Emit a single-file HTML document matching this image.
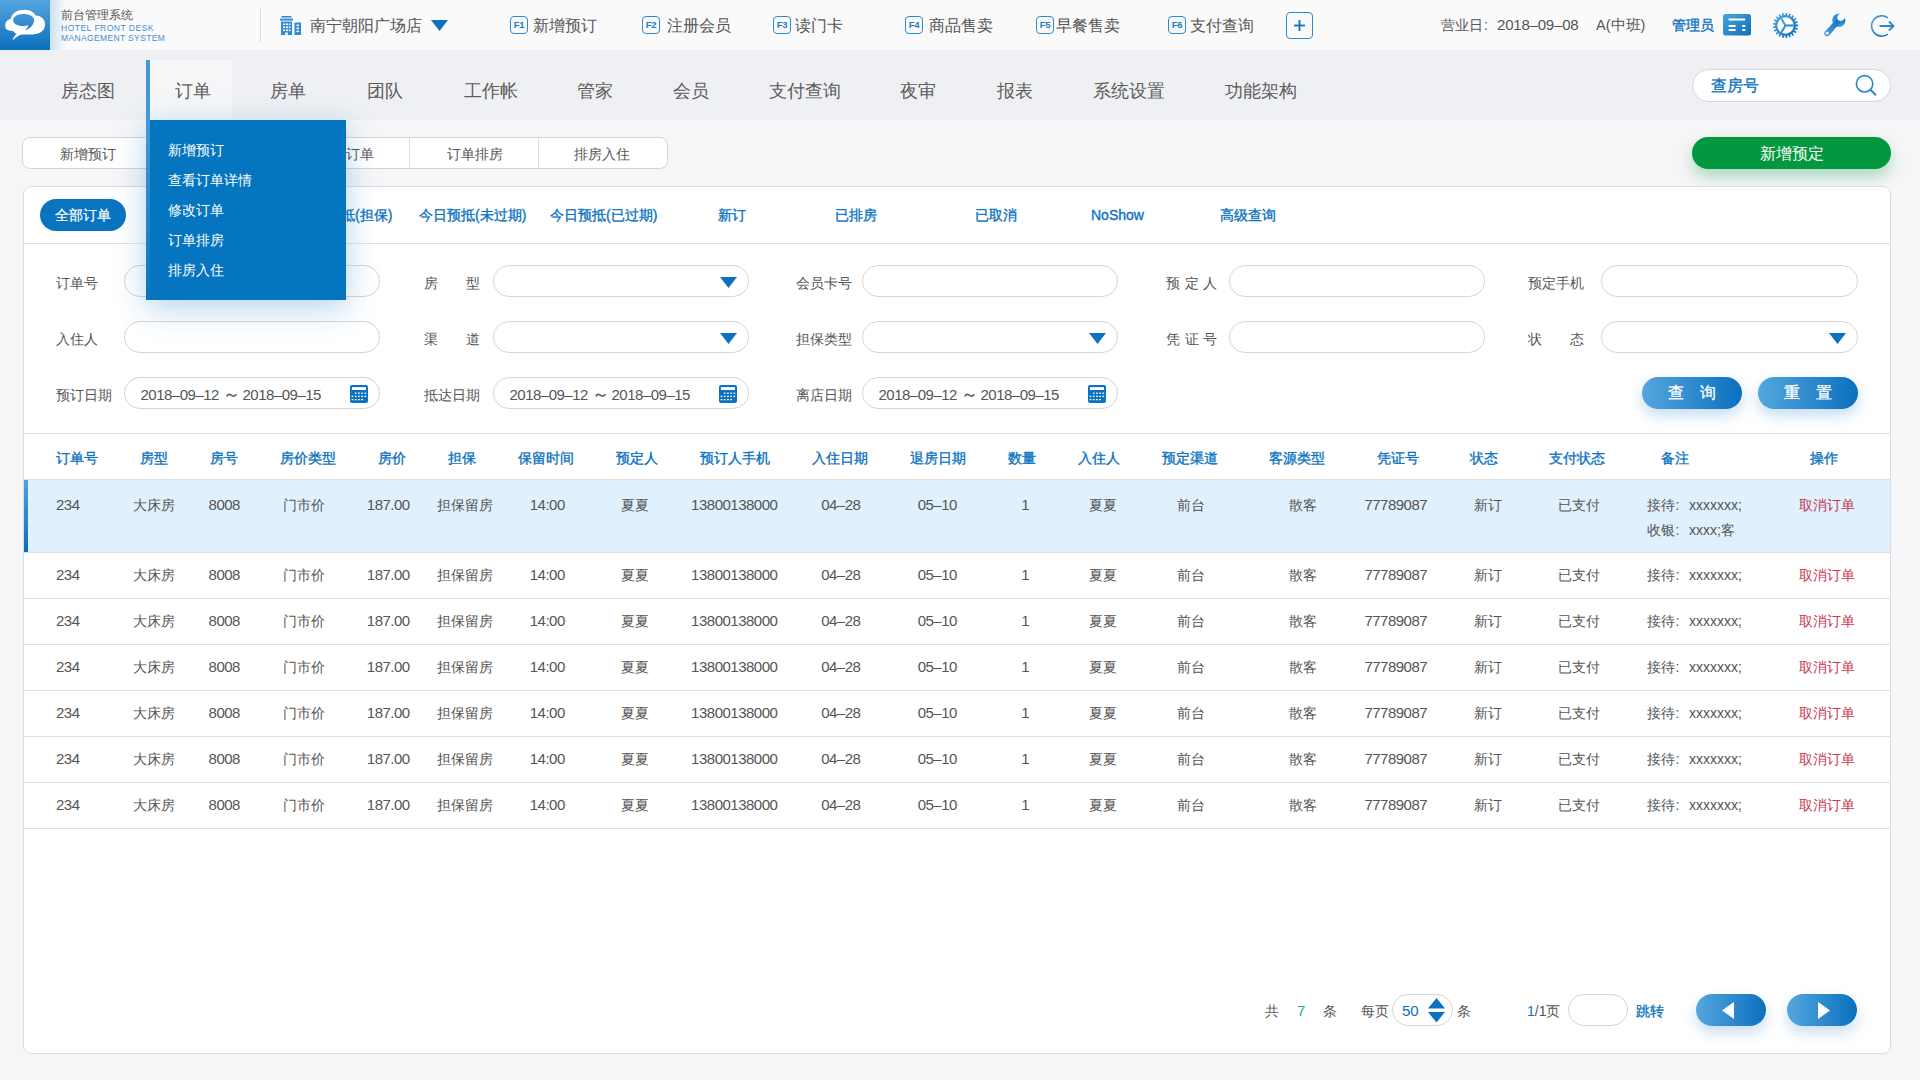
<!DOCTYPE html><html><head><meta charset="utf-8"><style>
html,body{margin:0;padding:0;}
body{width:1920px;height:1080px;position:relative;overflow:hidden;background:#f6f6f8;font-family:"Liberation Sans",sans-serif;}
.t{position:absolute;white-space:nowrap;}
.r{position:absolute;box-sizing:border-box;}
svg{position:absolute;overflow:visible;}
</style></head><body>
<div class="r" style="left:0px;top:0px;width:1920px;height:50px;background:#fafafb;"></div>
<div class="r" style="left:0px;top:50px;width:1920px;height:70px;background:#eef0f3;"></div>
<div class="r" style="left:50px;top:0px;width:16px;height:50px;background:linear-gradient(90deg,rgba(200,222,240,0.9),rgba(250,250,251,0));"></div>
<div class="r" style="left:0px;top:0px;width:50px;height:50px;background:linear-gradient(180deg,#55a6de,#0a6fbd);"></div>
<svg style="left:0;top:0" width="50" height="50" viewBox="0 0 50 50">
<path fill="#fff" fill-rule="evenodd" d="M8.5 30.2 C3.8 29.6 3.8 19.6 10.6 18.9 C12.2 12.6 17.5 9.7 24.5 9.7 C30.5 9.7 34 12.5 35.6 15.4 C41.6 15.6 45.2 19.6 45.1 24.6 C45 30.4 40.2 34.4 33 34.4 L22 34.4 C18.5 35.2 15.3 37.5 12.6 40.4 C13.2 37.4 15 35 17 33.8 C15.3 33.2 14 32.2 13.2 30.9 C11.5 31 10 30.8 8.5 30.2 Z M23.8 14 C17.5 14 13.2 16.6 13.2 20.2 C13.2 23.6 17.3 26.1 23.6 26 C25.2 26 26.8 25.7 28.4 25.3 C27.8 27.3 26.6 29.1 24.6 30.6 C29.3 29.4 32.4 26.5 33.6 22.8 C34.1 21.9 34.2 21 34.2 20.2 C34.2 16.6 29.8 14 23.8 14 Z"/>
</svg>
<div class="t" style="left:61px;top:7.5px;font-size:12px;line-height:14px;color:#555;">前台管理系统</div>
<div class="t" style="left:61px;top:23.0px;font-size:8.5px;line-height:10px;color:#3a90d2;letter-spacing:0.5px;">HOTEL FRONT DESK</div>
<div class="t" style="left:61px;top:33.0px;font-size:8.5px;line-height:10px;color:#3a90d2;letter-spacing:0.36px;">MANAGEMENT SYSTEM</div>
<div class="r" style="left:260px;top:9px;width:1px;height:33px;background:#dcdcdc;"></div>
<svg style="left:280px;top:16px" width="22" height="19" viewBox="0 0 22 19">
<rect x="1.5" y="0" width="10" height="1.6" fill="#2f8bd2"/>
<rect x="0" y="2.6" width="13" height="2" fill="#2f8bd2"/>
<g fill="#2f8bd2">
<rect x="1" y="5.6" width="11" height="13.4"/>
<rect x="14.5" y="6.5" width="6.5" height="12.5"/>
</g>
<g fill="#fafafb">
<rect x="3" y="7.5" width="2.2" height="1.6"/><rect x="6" y="7.5" width="2.2" height="1.6"/><rect x="9" y="7.5" width="1.5" height="1.6"/>
<rect x="3" y="10.5" width="2.2" height="1.6"/><rect x="6" y="10.5" width="2.2" height="1.6"/><rect x="9" y="10.5" width="1.5" height="1.6"/>
<rect x="3" y="13.5" width="2.2" height="1.6"/><rect x="6" y="13.5" width="2.2" height="1.6"/><rect x="9" y="13.5" width="1.5" height="1.6"/>
<rect x="5.2" y="16.5" width="2.6" height="2.5"/>
<rect x="16.5" y="8.5" width="2.5" height="1.6"/><rect x="16.5" y="11.5" width="2.5" height="1.6"/><rect x="16.5" y="14.5" width="2.5" height="1.6"/>
</g></svg>
<div class="t" style="left:310px;top:16.0px;font-size:16px;line-height:20px;color:#555;">南宁朝阳广场店</div>
<svg style="left:431px;top:20px" width="17" height="11"><path d="M0 0 H17 L8.5 11 Z" fill="#0a72bf"/></svg>
<div class="r" style="left:510px;top:16px;width:18px;height:18px;border:1.3px solid #2b8ad0;border-radius:4px;"></div>
<div class="t" style="left:510.0px;top:18.0px;width:18px;text-align:center;font-size:9.5px;line-height:14px;color:#1a7cc6;font-weight:bold;letter-spacing:-0.2px;">F1</div>
<div class="t" style="left:533px;top:16.0px;font-size:16px;line-height:20px;color:#555;">新增预订</div>
<div class="r" style="left:642px;top:16px;width:18px;height:18px;border:1.3px solid #2b8ad0;border-radius:4px;"></div>
<div class="t" style="left:642.0px;top:18.0px;width:18px;text-align:center;font-size:9.5px;line-height:14px;color:#1a7cc6;font-weight:bold;letter-spacing:-0.2px;">F2</div>
<div class="t" style="left:667px;top:16.0px;font-size:16px;line-height:20px;color:#555;">注册会员</div>
<div class="r" style="left:773px;top:16px;width:18px;height:18px;border:1.3px solid #2b8ad0;border-radius:4px;"></div>
<div class="t" style="left:773.0px;top:18.0px;width:18px;text-align:center;font-size:9.5px;line-height:14px;color:#1a7cc6;font-weight:bold;letter-spacing:-0.2px;">F3</div>
<div class="t" style="left:795px;top:16.0px;font-size:16px;line-height:20px;color:#555;">读门卡</div>
<div class="r" style="left:905px;top:16px;width:18px;height:18px;border:1.3px solid #2b8ad0;border-radius:4px;"></div>
<div class="t" style="left:905.0px;top:18.0px;width:18px;text-align:center;font-size:9.5px;line-height:14px;color:#1a7cc6;font-weight:bold;letter-spacing:-0.2px;">F4</div>
<div class="t" style="left:929px;top:16.0px;font-size:16px;line-height:20px;color:#555;">商品售卖</div>
<div class="r" style="left:1036px;top:16px;width:18px;height:18px;border:1.3px solid #2b8ad0;border-radius:4px;"></div>
<div class="t" style="left:1036.0px;top:18.0px;width:18px;text-align:center;font-size:9.5px;line-height:14px;color:#1a7cc6;font-weight:bold;letter-spacing:-0.2px;">F5</div>
<div class="t" style="left:1056px;top:16.0px;font-size:16px;line-height:20px;color:#555;">早餐售卖</div>
<div class="r" style="left:1168px;top:16px;width:18px;height:18px;border:1.3px solid #2b8ad0;border-radius:4px;"></div>
<div class="t" style="left:1168.0px;top:18.0px;width:18px;text-align:center;font-size:9.5px;line-height:14px;color:#1a7cc6;font-weight:bold;letter-spacing:-0.2px;">F6</div>
<div class="t" style="left:1190px;top:16.0px;font-size:16px;line-height:20px;color:#555;">支付查询</div>
<div class="r" style="left:1286px;top:12px;width:27px;height:27px;border:1.3px solid #2b8ad0;border-radius:4px;"></div>
<svg style="left:1292px;top:18px" width="15" height="15"><rect x="6.6" y="2" width="1.8" height="11" fill="#0a72bf"/><rect x="2" y="6.6" width="11" height="1.8" fill="#0a72bf"/></svg>
<div class="t" style="left:1441px;top:15.0px;font-size:14px;line-height:20px;color:#555;">营业日</div>
<div class="t" style="left:1484px;top:15.0px;font-size:14px;line-height:20px;color:#555;">:</div>
<div class="t" style="left:1497px;top:15.0px;font-size:15px;line-height:20px;color:#555;letter-spacing:-0.2px;">2018–09–08</div>
<div class="t" style="left:1596px;top:15.0px;font-size:14.5px;line-height:20px;color:#555;">A(中班)</div>
<div class="t" style="left:1672px;top:15.0px;font-size:14px;line-height:20px;color:#0a72bf;-webkit-text-stroke:0.35px #0a72bf;">管理员</div>
<svg style="left:1723px;top:14px" width="28" height="22" viewBox="0 0 28 22">
<defs><linearGradient id="gc" x1="0" y1="0" x2="1" y2="1"><stop offset="0" stop-color="#4ea3dd"/><stop offset="1" stop-color="#0a6fbd"/></linearGradient></defs>
<rect x="0" y="0" width="28" height="21.5" rx="2.5" fill="url(#gc)"/>
<rect x="5.4" y="4.4" width="17" height="2" rx="1" fill="#fff"/>
<rect x="5.4" y="11" width="7.5" height="2" rx="1" fill="#fff"/><rect x="19" y="11" width="3.6" height="2" rx="1" fill="#fff"/>
<rect x="5.4" y="15" width="7.5" height="2" rx="1" fill="#fff"/><rect x="19" y="15" width="3.6" height="2" rx="1" fill="#fff"/>
</svg>
<svg style="left:1773px;top:13px" width="25" height="25" viewBox="0 0 25 25">
<defs><linearGradient id="gg" x1="0" y1="0" x2="1" y2="1"><stop offset="0" stop-color="#55a6de"/><stop offset="1" stop-color="#0a6fbd"/></linearGradient></defs>
<polygon points="22.46,11.60 25.07,11.60 25.07,13.40 22.46,13.40 22.28,14.58 24.78,15.34 24.24,17.07 21.75,16.29 21.23,17.37 23.39,18.83 22.37,20.33 20.22,18.85 19.41,19.73 21.04,21.76 19.63,22.89 18.01,20.85 16.97,21.44 17.93,23.87 16.25,24.53 15.30,22.10 14.14,22.36 14.34,24.96 12.54,25.10 12.35,22.50 11.16,22.41 10.58,24.95 8.82,24.55 9.41,22.01 8.30,21.57 7.00,23.84 5.43,22.93 6.74,20.68 5.81,19.93 3.90,21.71 2.67,20.39 4.59,18.62 3.92,17.63 1.57,18.77 0.78,17.14 3.14,16.01 2.79,14.87 0.21,15.27 -0.06,13.48 2.52,13.10 2.52,11.90 -0.06,11.52 0.21,9.73 2.79,10.13 3.14,8.99 0.78,7.86 1.57,6.23 3.92,7.37 4.59,6.38 2.67,4.61 3.90,3.29 5.81,5.07 6.74,4.32 5.43,2.07 7.00,1.16 8.30,3.43 9.41,2.99 8.82,0.45 10.58,0.05 11.16,2.59 12.35,2.50 12.54,-0.10 14.34,0.04 14.14,2.64 15.30,2.90 16.25,0.47 17.93,1.13 16.97,3.56 18.01,4.15 19.63,2.11 21.04,3.24 19.41,5.27 20.22,6.15 22.37,4.67 23.39,6.17 21.23,7.63 21.75,8.71 24.24,7.93 24.78,9.66 22.28,10.42" fill="url(#gg)"/>
<circle cx="12.5" cy="12.5" r="10.4" fill="url(#gg)"/>
<circle cx="12.5" cy="12.5" r="8.2" fill="#fafafb"/>
<g stroke="url(#gg)" stroke-width="2" fill="none">
<path d="M12.5 12.5 L8.3 5.6 M12.5 12.5 L8.3 19.4 M12.5 12.5 L20.7 12.5"/></g>
</svg>
<svg style="left:1824px;top:13px" width="22" height="24" viewBox="0 0 22 24">
<defs><linearGradient id="gw" x1="0" y1="1" x2="1" y2="0"><stop offset="0" stop-color="#55a6de"/><stop offset="1" stop-color="#0a6fbd"/></linearGradient>
<mask id="wm"><rect x="-2" y="-2" width="26" height="28" fill="#fff"/><circle cx="16.6" cy="4.6" r="3.3" fill="#000"/><path d="M18.93 6.93 L14.27 2.27 L21.3 -4.8 L25.9 -0.1 Z" fill="#000"/><circle cx="3.2" cy="20.3" r="1.45" fill="#000"/></mask></defs>
<g mask="url(#wm)" fill="url(#gw)">
<circle cx="14.8" cy="7.4" r="6.6"/>
<path d="M12.8 5.8 L16.2 9.4 L5.2 22.4 C4 23.6 2 23.6 0.9 22.4 C-0.1 21.3 -0.1 19.6 1 18.6 Z"/>
</g>
</svg>
<svg style="left:1870px;top:14px" width="25" height="24" viewBox="0 0 25 24">
<defs><linearGradient id="gl" x1="0" y1="0" x2="1" y2="1"><stop offset="0" stop-color="#4ea3dd"/><stop offset="1" stop-color="#0a6fbd"/></linearGradient></defs>
<path d="M17.8 3.8 A10.2 10.2 0 1 0 17.8 20.2" stroke="url(#gl)" stroke-width="1.6" fill="none"/>
<path d="M9.5 12 H23.5 M19 7.5 L23.5 12 L19 16.5" stroke="#2b88ce" stroke-width="1.8" fill="none"/>
</svg>
<div class="r" style="left:146px;top:60px;width:86px;height:60px;background:#f6f6f9;"></div>
<div class="r" style="left:146px;top:60px;width:4px;height:240px;background:linear-gradient(180deg,#4399d6 0%,#4399d6 28%,#2a88cc 60%,#0675bf 100%);z-index:5;"></div>
<div class="t" style="left:61px;top:80.5px;font-size:18px;line-height:20px;color:#5c5c5c;">房态图</div>
<div class="t" style="left:175px;top:80.5px;font-size:18px;line-height:20px;color:#5c5c5c;">订单</div>
<div class="t" style="left:270px;top:80.5px;font-size:18px;line-height:20px;color:#5c5c5c;">房单</div>
<div class="t" style="left:367px;top:80.5px;font-size:18px;line-height:20px;color:#5c5c5c;">团队</div>
<div class="t" style="left:464px;top:80.5px;font-size:18px;line-height:20px;color:#5c5c5c;">工作帐</div>
<div class="t" style="left:577px;top:80.5px;font-size:18px;line-height:20px;color:#5c5c5c;">管家</div>
<div class="t" style="left:673px;top:80.5px;font-size:18px;line-height:20px;color:#5c5c5c;">会员</div>
<div class="t" style="left:769px;top:80.5px;font-size:18px;line-height:20px;color:#5c5c5c;">支付查询</div>
<div class="t" style="left:900px;top:80.5px;font-size:18px;line-height:20px;color:#5c5c5c;">夜审</div>
<div class="t" style="left:997px;top:80.5px;font-size:18px;line-height:20px;color:#5c5c5c;">报表</div>
<div class="t" style="left:1093px;top:80.5px;font-size:18px;line-height:20px;color:#5c5c5c;">系统设置</div>
<div class="t" style="left:1225px;top:80.5px;font-size:18px;line-height:20px;color:#5c5c5c;">功能架构</div>
<div class="r" style="left:1692px;top:69px;width:199px;height:33px;background:#fff;border:1px solid #d6d6d6;border-radius:17px;"></div>
<div class="t" style="left:1711px;top:76.0px;font-size:16px;line-height:20px;color:#0a72bf;-webkit-text-stroke:0.3px #0a72bf;">查房号</div>
<svg style="left:1855px;top:74px" width="24" height="24"><circle cx="9.6" cy="9.8" r="8.2" stroke="#2a88cf" stroke-width="1.7" fill="none"/><path d="M15.5 15.8 L21 21.2" stroke="#2a88cf" stroke-width="1.9"/></svg>
<div class="r" style="left:22px;top:137px;width:646px;height:32px;background:#fff;border:1px solid #d5d5d5;border-radius:8px;"></div>
<div class="r" style="left:151px;top:138px;width:1px;height:30px;background:#dcdcdc;"></div>
<div class="r" style="left:280px;top:138px;width:1px;height:30px;background:#dcdcdc;"></div>
<div class="r" style="left:409px;top:138px;width:1px;height:30px;background:#dcdcdc;"></div>
<div class="r" style="left:538px;top:138px;width:1px;height:30px;background:#dcdcdc;"></div>
<div class="t" style="left:23.0px;top:144.0px;width:129px;text-align:center;font-size:14px;line-height:20px;color:#555;">新增预订</div>
<div class="t" style="left:152.0px;top:144.0px;width:129px;text-align:center;font-size:14px;line-height:20px;color:#555;">查看订单详情</div>
<div class="t" style="left:281.0px;top:144.0px;width:129px;text-align:center;font-size:14px;line-height:20px;color:#555;">修改订单</div>
<div class="t" style="left:410.0px;top:144.0px;width:129px;text-align:center;font-size:14px;line-height:20px;color:#555;">订单排房</div>
<div class="t" style="left:537.5px;top:144.0px;width:129px;text-align:center;font-size:14px;line-height:20px;color:#555;">排房入住</div>
<div class="r" style="left:1692px;top:137px;width:199px;height:32px;background:#03973f;border-radius:16px;box-shadow:0 8px 16px rgba(3,151,63,0.3);"></div>
<div class="t" style="left:1692.0px;top:144.0px;width:199px;text-align:center;font-size:16px;line-height:20px;color:#fff;">新增预定</div>
<div class="r" style="left:23px;top:186px;width:1868px;height:868px;background:#fff;border:1px solid #dcdcdc;border-radius:8px;"></div>
<div class="r" style="left:40px;top:199px;width:86px;height:32px;background:#0a74c0;border-radius:16px;"></div>
<div class="t" style="left:40.0px;top:205.0px;width:86px;text-align:center;font-size:14px;line-height:20px;color:#fff;-webkit-text-stroke:0.2px #fff;">全部订单</div>
<div class="t" style="left:299px;top:205.0px;font-size:14px;line-height:20px;color:#0a72bf;-webkit-text-stroke:0.35px #0a72bf;">今日预抵(担保)</div>
<div class="t" style="left:419px;top:205.0px;font-size:14px;line-height:20px;color:#0a72bf;-webkit-text-stroke:0.35px #0a72bf;">今日预抵(未过期)</div>
<div class="t" style="left:550px;top:205.0px;font-size:14px;line-height:20px;color:#0a72bf;-webkit-text-stroke:0.35px #0a72bf;">今日预抵(已过期)</div>
<div class="t" style="left:718px;top:205.0px;font-size:14px;line-height:20px;color:#0a72bf;-webkit-text-stroke:0.35px #0a72bf;">新订</div>
<div class="t" style="left:835px;top:205.0px;font-size:14px;line-height:20px;color:#0a72bf;-webkit-text-stroke:0.35px #0a72bf;">已排房</div>
<div class="t" style="left:975px;top:205.0px;font-size:14px;line-height:20px;color:#0a72bf;-webkit-text-stroke:0.35px #0a72bf;">已取消</div>
<div class="t" style="left:1091px;top:205.0px;font-size:14px;line-height:20px;color:#0a72bf;-webkit-text-stroke:0.35px #0a72bf;">NoShow</div>
<div class="t" style="left:1220px;top:205.0px;font-size:14px;line-height:20px;color:#0a72bf;-webkit-text-stroke:0.35px #0a72bf;">高级查询</div>
<div class="r" style="left:24px;top:243px;width:1866px;height:1px;background:#e2e2e2;"></div>
<div class="t" style="left:56px;top:273.0px;font-size:14px;line-height:20px;color:#555;">订单号</div>
<div class="r" style="left:124px;top:265px;width:256px;height:32px;background:#fff;border:1px solid #d6d6d6;border-radius:16px;"></div>
<div class="t" style="left:424px;top:273px;width:56px;font-size:14px;line-height:20px;color:#555;display:flex;justify-content:space-between;"><span>房</span><span>型</span></div>
<div class="r" style="left:493px;top:265px;width:256px;height:32px;background:#fff;border:1px solid #d6d6d6;border-radius:16px;"></div>
<svg style="left:720px;top:277px" width="17" height="11"><path d="M0 0 H17 L8.5 11 Z" fill="#0a72bf"/></svg>
<div class="t" style="left:796px;top:273.0px;font-size:14px;line-height:20px;color:#555;">会员卡号</div>
<div class="r" style="left:862px;top:265px;width:256px;height:32px;background:#fff;border:1px solid #d6d6d6;border-radius:16px;"></div>
<div class="t" style="left:1166px;top:273px;width:51px;font-size:14px;line-height:20px;color:#555;display:flex;justify-content:space-between;"><span>预</span><span>定</span><span>人</span></div>
<div class="r" style="left:1229px;top:265px;width:256px;height:32px;background:#fff;border:1px solid #d6d6d6;border-radius:16px;"></div>
<div class="t" style="left:1528px;top:273.0px;font-size:14px;line-height:20px;color:#555;">预定手机</div>
<div class="r" style="left:1601px;top:265px;width:257px;height:32px;background:#fff;border:1px solid #d6d6d6;border-radius:16px;"></div>
<div class="t" style="left:56px;top:328.5px;font-size:14px;line-height:20px;color:#555;">入住人</div>
<div class="r" style="left:124px;top:321px;width:256px;height:32px;background:#fff;border:1px solid #d6d6d6;border-radius:16px;"></div>
<div class="t" style="left:424px;top:328.5px;width:56px;font-size:14px;line-height:20px;color:#555;display:flex;justify-content:space-between;"><span>渠</span><span>道</span></div>
<div class="r" style="left:493px;top:321px;width:256px;height:32px;background:#fff;border:1px solid #d6d6d6;border-radius:16px;"></div>
<svg style="left:720px;top:333px" width="17" height="11"><path d="M0 0 H17 L8.5 11 Z" fill="#0a72bf"/></svg>
<div class="t" style="left:796px;top:328.5px;font-size:14px;line-height:20px;color:#555;">担保类型</div>
<div class="r" style="left:862px;top:321px;width:256px;height:32px;background:#fff;border:1px solid #d6d6d6;border-radius:16px;"></div>
<svg style="left:1089px;top:333px" width="17" height="11"><path d="M0 0 H17 L8.5 11 Z" fill="#0a72bf"/></svg>
<div class="t" style="left:1166px;top:328.5px;width:51px;font-size:14px;line-height:20px;color:#555;display:flex;justify-content:space-between;"><span>凭</span><span>证</span><span>号</span></div>
<div class="r" style="left:1229px;top:321px;width:256px;height:32px;background:#fff;border:1px solid #d6d6d6;border-radius:16px;"></div>
<div class="t" style="left:1528px;top:328.5px;width:56px;font-size:14px;line-height:20px;color:#555;display:flex;justify-content:space-between;"><span>状</span><span>态</span></div>
<div class="r" style="left:1601px;top:321px;width:257px;height:32px;background:#fff;border:1px solid #d6d6d6;border-radius:16px;"></div>
<svg style="left:1829px;top:333px" width="17" height="11"><path d="M0 0 H17 L8.5 11 Z" fill="#0a72bf"/></svg>
<div class="t" style="left:56px;top:385.0px;font-size:14px;line-height:20px;color:#555;">预订日期</div>
<div class="r" style="left:124px;top:377px;width:256px;height:32px;background:#fff;border:1px solid #d6d6d6;border-radius:16px;"></div>
<div class="t" style="left:140.5px;top:385.0px;font-size:15px;line-height:20px;color:#555;letter-spacing:-0.5px;">2018–09–12</div>
<div class="t" style="left:223px;top:385.0px;font-size:17px;line-height:20px;color:#555;-webkit-text-stroke:0.3px #555;">～</div>
<div class="t" style="left:242.5px;top:385.0px;font-size:15px;line-height:20px;color:#555;letter-spacing:-0.5px;">2018–09–15</div>
<svg style="left:350px;top:385px" width="18" height="18" viewBox="0 0 18 18"><rect x="0" y="0" width="18" height="18" rx="2" fill="#0a72bf"/><rect x="1.9" y="2.1" width="14.1" height="2.9" fill="#fff"/><rect x="4.85" y="7.55" width="1.7" height="1.3" fill="#fff"/><rect x="8.05" y="7.55" width="1.7" height="1.3" fill="#fff"/><rect x="11.25" y="7.55" width="1.7" height="1.3" fill="#fff"/><rect x="14.45" y="7.55" width="1.7" height="1.3" fill="#fff"/><rect x="1.65" y="10.75" width="1.7" height="1.3" fill="#fff"/><rect x="4.85" y="10.75" width="1.7" height="1.3" fill="#fff"/><rect x="8.05" y="10.75" width="1.7" height="1.3" fill="#fff"/><rect x="11.25" y="10.75" width="1.7" height="1.3" fill="#fff"/><rect x="14.45" y="10.75" width="1.7" height="1.3" fill="#fff"/><rect x="1.65" y="13.95" width="1.7" height="1.3" fill="#fff"/><rect x="4.85" y="13.95" width="1.7" height="1.3" fill="#fff"/><rect x="8.05" y="13.95" width="1.7" height="1.3" fill="#fff"/><rect x="11.25" y="13.95" width="1.7" height="1.3" fill="#fff"/></svg>
<div class="t" style="left:424px;top:385.0px;font-size:14px;line-height:20px;color:#555;">抵达日期</div>
<div class="r" style="left:493px;top:377px;width:256px;height:32px;background:#fff;border:1px solid #d6d6d6;border-radius:16px;"></div>
<div class="t" style="left:509.5px;top:385.0px;font-size:15px;line-height:20px;color:#555;letter-spacing:-0.5px;">2018–09–12</div>
<div class="t" style="left:592px;top:385.0px;font-size:17px;line-height:20px;color:#555;-webkit-text-stroke:0.3px #555;">～</div>
<div class="t" style="left:611.5px;top:385.0px;font-size:15px;line-height:20px;color:#555;letter-spacing:-0.5px;">2018–09–15</div>
<svg style="left:719px;top:385px" width="18" height="18" viewBox="0 0 18 18"><rect x="0" y="0" width="18" height="18" rx="2" fill="#0a72bf"/><rect x="1.9" y="2.1" width="14.1" height="2.9" fill="#fff"/><rect x="4.85" y="7.55" width="1.7" height="1.3" fill="#fff"/><rect x="8.05" y="7.55" width="1.7" height="1.3" fill="#fff"/><rect x="11.25" y="7.55" width="1.7" height="1.3" fill="#fff"/><rect x="14.45" y="7.55" width="1.7" height="1.3" fill="#fff"/><rect x="1.65" y="10.75" width="1.7" height="1.3" fill="#fff"/><rect x="4.85" y="10.75" width="1.7" height="1.3" fill="#fff"/><rect x="8.05" y="10.75" width="1.7" height="1.3" fill="#fff"/><rect x="11.25" y="10.75" width="1.7" height="1.3" fill="#fff"/><rect x="14.45" y="10.75" width="1.7" height="1.3" fill="#fff"/><rect x="1.65" y="13.95" width="1.7" height="1.3" fill="#fff"/><rect x="4.85" y="13.95" width="1.7" height="1.3" fill="#fff"/><rect x="8.05" y="13.95" width="1.7" height="1.3" fill="#fff"/><rect x="11.25" y="13.95" width="1.7" height="1.3" fill="#fff"/></svg>
<div class="t" style="left:796px;top:385.0px;font-size:14px;line-height:20px;color:#555;">离店日期</div>
<div class="r" style="left:862px;top:377px;width:256px;height:32px;background:#fff;border:1px solid #d6d6d6;border-radius:16px;"></div>
<div class="t" style="left:878.5px;top:385.0px;font-size:15px;line-height:20px;color:#555;letter-spacing:-0.5px;">2018–09–12</div>
<div class="t" style="left:961px;top:385.0px;font-size:17px;line-height:20px;color:#555;-webkit-text-stroke:0.3px #555;">～</div>
<div class="t" style="left:980.5px;top:385.0px;font-size:15px;line-height:20px;color:#555;letter-spacing:-0.5px;">2018–09–15</div>
<svg style="left:1088px;top:385px" width="18" height="18" viewBox="0 0 18 18"><rect x="0" y="0" width="18" height="18" rx="2" fill="#0a72bf"/><rect x="1.9" y="2.1" width="14.1" height="2.9" fill="#fff"/><rect x="4.85" y="7.55" width="1.7" height="1.3" fill="#fff"/><rect x="8.05" y="7.55" width="1.7" height="1.3" fill="#fff"/><rect x="11.25" y="7.55" width="1.7" height="1.3" fill="#fff"/><rect x="14.45" y="7.55" width="1.7" height="1.3" fill="#fff"/><rect x="1.65" y="10.75" width="1.7" height="1.3" fill="#fff"/><rect x="4.85" y="10.75" width="1.7" height="1.3" fill="#fff"/><rect x="8.05" y="10.75" width="1.7" height="1.3" fill="#fff"/><rect x="11.25" y="10.75" width="1.7" height="1.3" fill="#fff"/><rect x="14.45" y="10.75" width="1.7" height="1.3" fill="#fff"/><rect x="1.65" y="13.95" width="1.7" height="1.3" fill="#fff"/><rect x="4.85" y="13.95" width="1.7" height="1.3" fill="#fff"/><rect x="8.05" y="13.95" width="1.7" height="1.3" fill="#fff"/><rect x="11.25" y="13.95" width="1.7" height="1.3" fill="#fff"/></svg>
<div class="r" style="left:1642px;top:377px;width:100px;height:32px;background:linear-gradient(90deg,#55a6de,#0a70be);border-radius:16px;box-shadow:0 6px 14px rgba(10,114,191,0.25);"></div>
<div class="t" style="left:1642.0px;top:383.0px;width:100px;text-align:center;font-size:16px;line-height:20px;color:#fff;-webkit-text-stroke:0.3px #fff;">查　询</div>
<div class="r" style="left:1758px;top:377px;width:100px;height:32px;background:linear-gradient(90deg,#55a6de,#0a70be);border-radius:16px;box-shadow:0 6px 14px rgba(10,114,191,0.25);"></div>
<div class="t" style="left:1758.0px;top:383.0px;width:100px;text-align:center;font-size:16px;line-height:20px;color:#fff;-webkit-text-stroke:0.3px #fff;">重　置</div>
<div class="r" style="left:24px;top:433px;width:1866px;height:1px;background:#e2e2e2;"></div>
<div class="t" style="left:56px;top:448.0px;font-size:14px;line-height:20px;color:#0a72bf;-webkit-text-stroke:0.35px #0a72bf;">订单号</div>
<div class="t" style="left:94.0px;top:448.0px;width:120px;text-align:center;font-size:14px;line-height:20px;color:#0a72bf;-webkit-text-stroke:0.35px #0a72bf;">房型</div>
<div class="t" style="left:164.0px;top:448.0px;width:120px;text-align:center;font-size:14px;line-height:20px;color:#0a72bf;-webkit-text-stroke:0.35px #0a72bf;">房号</div>
<div class="t" style="left:248.0px;top:448.0px;width:120px;text-align:center;font-size:14px;line-height:20px;color:#0a72bf;-webkit-text-stroke:0.35px #0a72bf;">房价类型</div>
<div class="t" style="left:332.0px;top:448.0px;width:120px;text-align:center;font-size:14px;line-height:20px;color:#0a72bf;-webkit-text-stroke:0.35px #0a72bf;">房价</div>
<div class="t" style="left:402.0px;top:448.0px;width:120px;text-align:center;font-size:14px;line-height:20px;color:#0a72bf;-webkit-text-stroke:0.35px #0a72bf;">担保</div>
<div class="t" style="left:485.5px;top:448.0px;width:120px;text-align:center;font-size:14px;line-height:20px;color:#0a72bf;-webkit-text-stroke:0.35px #0a72bf;">保留时间</div>
<div class="t" style="left:577.0px;top:448.0px;width:120px;text-align:center;font-size:14px;line-height:20px;color:#0a72bf;-webkit-text-stroke:0.35px #0a72bf;">预定人</div>
<div class="t" style="left:675.0px;top:448.0px;width:120px;text-align:center;font-size:14px;line-height:20px;color:#0a72bf;-webkit-text-stroke:0.35px #0a72bf;">预订人手机</div>
<div class="t" style="left:780.0px;top:448.0px;width:120px;text-align:center;font-size:14px;line-height:20px;color:#0a72bf;-webkit-text-stroke:0.35px #0a72bf;">入住日期</div>
<div class="t" style="left:878.0px;top:448.0px;width:120px;text-align:center;font-size:14px;line-height:20px;color:#0a72bf;-webkit-text-stroke:0.35px #0a72bf;">退房日期</div>
<div class="t" style="left:962.0px;top:448.0px;width:120px;text-align:center;font-size:14px;line-height:20px;color:#0a72bf;-webkit-text-stroke:0.35px #0a72bf;">数量</div>
<div class="t" style="left:1038.5px;top:448.0px;width:120px;text-align:center;font-size:14px;line-height:20px;color:#0a72bf;-webkit-text-stroke:0.35px #0a72bf;">入住人</div>
<div class="t" style="left:1129.5px;top:448.0px;width:120px;text-align:center;font-size:14px;line-height:20px;color:#0a72bf;-webkit-text-stroke:0.35px #0a72bf;">预定渠道</div>
<div class="t" style="left:1237.0px;top:448.0px;width:120px;text-align:center;font-size:14px;line-height:20px;color:#0a72bf;-webkit-text-stroke:0.35px #0a72bf;">客源类型</div>
<div class="t" style="left:1337.5px;top:448.0px;width:120px;text-align:center;font-size:14px;line-height:20px;color:#0a72bf;-webkit-text-stroke:0.35px #0a72bf;">凭证号</div>
<div class="t" style="left:1423.5px;top:448.0px;width:120px;text-align:center;font-size:14px;line-height:20px;color:#0a72bf;-webkit-text-stroke:0.35px #0a72bf;">状态</div>
<div class="t" style="left:1517.0px;top:448.0px;width:120px;text-align:center;font-size:14px;line-height:20px;color:#0a72bf;-webkit-text-stroke:0.35px #0a72bf;">支付状态</div>
<div class="t" style="left:1615.0px;top:448.0px;width:120px;text-align:center;font-size:14px;line-height:20px;color:#0a72bf;-webkit-text-stroke:0.35px #0a72bf;">备注</div>
<div class="t" style="left:1764.0px;top:448.0px;width:120px;text-align:center;font-size:14px;line-height:20px;color:#0a72bf;-webkit-text-stroke:0.35px #0a72bf;">操作</div>
<div class="r" style="left:24px;top:479px;width:1866px;height:1px;background:#e2e2e2;"></div>
<div class="r" style="left:24px;top:480px;width:1866px;height:72px;background:#e1f0fd;"></div>
<div class="r" style="left:24px;top:480px;width:4px;height:72px;background:linear-gradient(180deg,#4fa3dc,#0a6fbd);"></div>
<div class="t" style="left:56px;top:494.5px;font-size:15px;line-height:20px;color:#555;letter-spacing:-0.5px;">234</div>
<div class="t" style="left:93.5px;top:494.5px;width:120px;text-align:center;font-size:14px;line-height:20px;color:#555;">大床房</div>
<div class="t" style="left:164.25px;top:494.5px;width:120px;text-align:center;font-size:15px;line-height:20px;color:#555;letter-spacing:-0.5px;">8008</div>
<div class="t" style="left:244.0px;top:494.5px;width:120px;text-align:center;font-size:14px;line-height:20px;color:#555;">门市价</div>
<div class="t" style="left:328.25px;top:494.5px;width:120px;text-align:center;font-size:15px;line-height:20px;color:#555;letter-spacing:-0.5px;">187.00</div>
<div class="t" style="left:405.0px;top:494.5px;width:120px;text-align:center;font-size:14px;line-height:20px;color:#555;">担保留房</div>
<div class="t" style="left:487.25px;top:494.5px;width:120px;text-align:center;font-size:15px;line-height:20px;color:#555;letter-spacing:-0.5px;">14:00</div>
<div class="t" style="left:574.5px;top:494.5px;width:120px;text-align:center;font-size:14px;line-height:20px;color:#555;">夏夏</div>
<div class="t" style="left:674.25px;top:494.5px;width:120px;text-align:center;font-size:15px;line-height:20px;color:#555;letter-spacing:-0.5px;">13800138000</div>
<div class="t" style="left:780.75px;top:494.5px;width:120px;text-align:center;font-size:15px;line-height:20px;color:#555;letter-spacing:-0.5px;">04–28</div>
<div class="t" style="left:877.25px;top:494.5px;width:120px;text-align:center;font-size:15px;line-height:20px;color:#555;letter-spacing:-0.5px;">05–10</div>
<div class="t" style="left:965.25px;top:494.5px;width:120px;text-align:center;font-size:15px;line-height:20px;color:#555;letter-spacing:-0.5px;">1</div>
<div class="t" style="left:1042.5px;top:494.5px;width:120px;text-align:center;font-size:14px;line-height:20px;color:#555;">夏夏</div>
<div class="t" style="left:1131.0px;top:494.5px;width:120px;text-align:center;font-size:14px;line-height:20px;color:#555;">前台</div>
<div class="t" style="left:1243.0px;top:494.5px;width:120px;text-align:center;font-size:14px;line-height:20px;color:#555;">散客</div>
<div class="t" style="left:1335.75px;top:494.5px;width:120px;text-align:center;font-size:15px;line-height:20px;color:#555;letter-spacing:-0.5px;">77789087</div>
<div class="t" style="left:1428.0px;top:494.5px;width:120px;text-align:center;font-size:14px;line-height:20px;color:#555;">新订</div>
<div class="t" style="left:1519.0px;top:494.5px;width:120px;text-align:center;font-size:14px;line-height:20px;color:#555;">已支付</div>
<div class="t" style="left:1647px;top:494.5px;font-size:14px;line-height:20px;color:#555;">接待</div>
<div class="t" style="left:1675.5px;top:494.5px;font-size:14px;line-height:20px;color:#555;">:</div>
<div class="t" style="left:1689px;top:494.5px;font-size:14px;line-height:20px;color:#555;">xxxxxxx;</div>
<div class="t" style="left:1767.0px;top:494.5px;width:120px;text-align:center;font-size:14px;line-height:20px;color:#c8374f;">取消订单</div>
<div class="t" style="left:1647px;top:520.0px;font-size:14px;line-height:20px;color:#555;">收银</div>
<div class="t" style="left:1675.5px;top:520.0px;font-size:14px;line-height:20px;color:#555;">:</div>
<div class="t" style="left:1689px;top:520.0px;font-size:14px;line-height:20px;color:#555;">xxxx;客</div>
<div class="t" style="left:56px;top:565.0px;font-size:15px;line-height:20px;color:#555;letter-spacing:-0.5px;">234</div>
<div class="t" style="left:93.5px;top:565.0px;width:120px;text-align:center;font-size:14px;line-height:20px;color:#555;">大床房</div>
<div class="t" style="left:164.25px;top:565.0px;width:120px;text-align:center;font-size:15px;line-height:20px;color:#555;letter-spacing:-0.5px;">8008</div>
<div class="t" style="left:244.0px;top:565.0px;width:120px;text-align:center;font-size:14px;line-height:20px;color:#555;">门市价</div>
<div class="t" style="left:328.25px;top:565.0px;width:120px;text-align:center;font-size:15px;line-height:20px;color:#555;letter-spacing:-0.5px;">187.00</div>
<div class="t" style="left:405.0px;top:565.0px;width:120px;text-align:center;font-size:14px;line-height:20px;color:#555;">担保留房</div>
<div class="t" style="left:487.25px;top:565.0px;width:120px;text-align:center;font-size:15px;line-height:20px;color:#555;letter-spacing:-0.5px;">14:00</div>
<div class="t" style="left:574.5px;top:565.0px;width:120px;text-align:center;font-size:14px;line-height:20px;color:#555;">夏夏</div>
<div class="t" style="left:674.25px;top:565.0px;width:120px;text-align:center;font-size:15px;line-height:20px;color:#555;letter-spacing:-0.5px;">13800138000</div>
<div class="t" style="left:780.75px;top:565.0px;width:120px;text-align:center;font-size:15px;line-height:20px;color:#555;letter-spacing:-0.5px;">04–28</div>
<div class="t" style="left:877.25px;top:565.0px;width:120px;text-align:center;font-size:15px;line-height:20px;color:#555;letter-spacing:-0.5px;">05–10</div>
<div class="t" style="left:965.25px;top:565.0px;width:120px;text-align:center;font-size:15px;line-height:20px;color:#555;letter-spacing:-0.5px;">1</div>
<div class="t" style="left:1042.5px;top:565.0px;width:120px;text-align:center;font-size:14px;line-height:20px;color:#555;">夏夏</div>
<div class="t" style="left:1131.0px;top:565.0px;width:120px;text-align:center;font-size:14px;line-height:20px;color:#555;">前台</div>
<div class="t" style="left:1243.0px;top:565.0px;width:120px;text-align:center;font-size:14px;line-height:20px;color:#555;">散客</div>
<div class="t" style="left:1335.75px;top:565.0px;width:120px;text-align:center;font-size:15px;line-height:20px;color:#555;letter-spacing:-0.5px;">77789087</div>
<div class="t" style="left:1428.0px;top:565.0px;width:120px;text-align:center;font-size:14px;line-height:20px;color:#555;">新订</div>
<div class="t" style="left:1519.0px;top:565.0px;width:120px;text-align:center;font-size:14px;line-height:20px;color:#555;">已支付</div>
<div class="t" style="left:1647px;top:565.0px;font-size:14px;line-height:20px;color:#555;">接待</div>
<div class="t" style="left:1675.5px;top:565.0px;font-size:14px;line-height:20px;color:#555;">:</div>
<div class="t" style="left:1689px;top:565.0px;font-size:14px;line-height:20px;color:#555;">xxxxxxx;</div>
<div class="t" style="left:1767.0px;top:565.0px;width:120px;text-align:center;font-size:14px;line-height:20px;color:#c8374f;">取消订单</div>
<div class="t" style="left:56px;top:611.0px;font-size:15px;line-height:20px;color:#555;letter-spacing:-0.5px;">234</div>
<div class="t" style="left:93.5px;top:611.0px;width:120px;text-align:center;font-size:14px;line-height:20px;color:#555;">大床房</div>
<div class="t" style="left:164.25px;top:611.0px;width:120px;text-align:center;font-size:15px;line-height:20px;color:#555;letter-spacing:-0.5px;">8008</div>
<div class="t" style="left:244.0px;top:611.0px;width:120px;text-align:center;font-size:14px;line-height:20px;color:#555;">门市价</div>
<div class="t" style="left:328.25px;top:611.0px;width:120px;text-align:center;font-size:15px;line-height:20px;color:#555;letter-spacing:-0.5px;">187.00</div>
<div class="t" style="left:405.0px;top:611.0px;width:120px;text-align:center;font-size:14px;line-height:20px;color:#555;">担保留房</div>
<div class="t" style="left:487.25px;top:611.0px;width:120px;text-align:center;font-size:15px;line-height:20px;color:#555;letter-spacing:-0.5px;">14:00</div>
<div class="t" style="left:574.5px;top:611.0px;width:120px;text-align:center;font-size:14px;line-height:20px;color:#555;">夏夏</div>
<div class="t" style="left:674.25px;top:611.0px;width:120px;text-align:center;font-size:15px;line-height:20px;color:#555;letter-spacing:-0.5px;">13800138000</div>
<div class="t" style="left:780.75px;top:611.0px;width:120px;text-align:center;font-size:15px;line-height:20px;color:#555;letter-spacing:-0.5px;">04–28</div>
<div class="t" style="left:877.25px;top:611.0px;width:120px;text-align:center;font-size:15px;line-height:20px;color:#555;letter-spacing:-0.5px;">05–10</div>
<div class="t" style="left:965.25px;top:611.0px;width:120px;text-align:center;font-size:15px;line-height:20px;color:#555;letter-spacing:-0.5px;">1</div>
<div class="t" style="left:1042.5px;top:611.0px;width:120px;text-align:center;font-size:14px;line-height:20px;color:#555;">夏夏</div>
<div class="t" style="left:1131.0px;top:611.0px;width:120px;text-align:center;font-size:14px;line-height:20px;color:#555;">前台</div>
<div class="t" style="left:1243.0px;top:611.0px;width:120px;text-align:center;font-size:14px;line-height:20px;color:#555;">散客</div>
<div class="t" style="left:1335.75px;top:611.0px;width:120px;text-align:center;font-size:15px;line-height:20px;color:#555;letter-spacing:-0.5px;">77789087</div>
<div class="t" style="left:1428.0px;top:611.0px;width:120px;text-align:center;font-size:14px;line-height:20px;color:#555;">新订</div>
<div class="t" style="left:1519.0px;top:611.0px;width:120px;text-align:center;font-size:14px;line-height:20px;color:#555;">已支付</div>
<div class="t" style="left:1647px;top:611.0px;font-size:14px;line-height:20px;color:#555;">接待</div>
<div class="t" style="left:1675.5px;top:611.0px;font-size:14px;line-height:20px;color:#555;">:</div>
<div class="t" style="left:1689px;top:611.0px;font-size:14px;line-height:20px;color:#555;">xxxxxxx;</div>
<div class="t" style="left:1767.0px;top:611.0px;width:120px;text-align:center;font-size:14px;line-height:20px;color:#c8374f;">取消订单</div>
<div class="t" style="left:56px;top:657.0px;font-size:15px;line-height:20px;color:#555;letter-spacing:-0.5px;">234</div>
<div class="t" style="left:93.5px;top:657.0px;width:120px;text-align:center;font-size:14px;line-height:20px;color:#555;">大床房</div>
<div class="t" style="left:164.25px;top:657.0px;width:120px;text-align:center;font-size:15px;line-height:20px;color:#555;letter-spacing:-0.5px;">8008</div>
<div class="t" style="left:244.0px;top:657.0px;width:120px;text-align:center;font-size:14px;line-height:20px;color:#555;">门市价</div>
<div class="t" style="left:328.25px;top:657.0px;width:120px;text-align:center;font-size:15px;line-height:20px;color:#555;letter-spacing:-0.5px;">187.00</div>
<div class="t" style="left:405.0px;top:657.0px;width:120px;text-align:center;font-size:14px;line-height:20px;color:#555;">担保留房</div>
<div class="t" style="left:487.25px;top:657.0px;width:120px;text-align:center;font-size:15px;line-height:20px;color:#555;letter-spacing:-0.5px;">14:00</div>
<div class="t" style="left:574.5px;top:657.0px;width:120px;text-align:center;font-size:14px;line-height:20px;color:#555;">夏夏</div>
<div class="t" style="left:674.25px;top:657.0px;width:120px;text-align:center;font-size:15px;line-height:20px;color:#555;letter-spacing:-0.5px;">13800138000</div>
<div class="t" style="left:780.75px;top:657.0px;width:120px;text-align:center;font-size:15px;line-height:20px;color:#555;letter-spacing:-0.5px;">04–28</div>
<div class="t" style="left:877.25px;top:657.0px;width:120px;text-align:center;font-size:15px;line-height:20px;color:#555;letter-spacing:-0.5px;">05–10</div>
<div class="t" style="left:965.25px;top:657.0px;width:120px;text-align:center;font-size:15px;line-height:20px;color:#555;letter-spacing:-0.5px;">1</div>
<div class="t" style="left:1042.5px;top:657.0px;width:120px;text-align:center;font-size:14px;line-height:20px;color:#555;">夏夏</div>
<div class="t" style="left:1131.0px;top:657.0px;width:120px;text-align:center;font-size:14px;line-height:20px;color:#555;">前台</div>
<div class="t" style="left:1243.0px;top:657.0px;width:120px;text-align:center;font-size:14px;line-height:20px;color:#555;">散客</div>
<div class="t" style="left:1335.75px;top:657.0px;width:120px;text-align:center;font-size:15px;line-height:20px;color:#555;letter-spacing:-0.5px;">77789087</div>
<div class="t" style="left:1428.0px;top:657.0px;width:120px;text-align:center;font-size:14px;line-height:20px;color:#555;">新订</div>
<div class="t" style="left:1519.0px;top:657.0px;width:120px;text-align:center;font-size:14px;line-height:20px;color:#555;">已支付</div>
<div class="t" style="left:1647px;top:657.0px;font-size:14px;line-height:20px;color:#555;">接待</div>
<div class="t" style="left:1675.5px;top:657.0px;font-size:14px;line-height:20px;color:#555;">:</div>
<div class="t" style="left:1689px;top:657.0px;font-size:14px;line-height:20px;color:#555;">xxxxxxx;</div>
<div class="t" style="left:1767.0px;top:657.0px;width:120px;text-align:center;font-size:14px;line-height:20px;color:#c8374f;">取消订单</div>
<div class="t" style="left:56px;top:703.0px;font-size:15px;line-height:20px;color:#555;letter-spacing:-0.5px;">234</div>
<div class="t" style="left:93.5px;top:703.0px;width:120px;text-align:center;font-size:14px;line-height:20px;color:#555;">大床房</div>
<div class="t" style="left:164.25px;top:703.0px;width:120px;text-align:center;font-size:15px;line-height:20px;color:#555;letter-spacing:-0.5px;">8008</div>
<div class="t" style="left:244.0px;top:703.0px;width:120px;text-align:center;font-size:14px;line-height:20px;color:#555;">门市价</div>
<div class="t" style="left:328.25px;top:703.0px;width:120px;text-align:center;font-size:15px;line-height:20px;color:#555;letter-spacing:-0.5px;">187.00</div>
<div class="t" style="left:405.0px;top:703.0px;width:120px;text-align:center;font-size:14px;line-height:20px;color:#555;">担保留房</div>
<div class="t" style="left:487.25px;top:703.0px;width:120px;text-align:center;font-size:15px;line-height:20px;color:#555;letter-spacing:-0.5px;">14:00</div>
<div class="t" style="left:574.5px;top:703.0px;width:120px;text-align:center;font-size:14px;line-height:20px;color:#555;">夏夏</div>
<div class="t" style="left:674.25px;top:703.0px;width:120px;text-align:center;font-size:15px;line-height:20px;color:#555;letter-spacing:-0.5px;">13800138000</div>
<div class="t" style="left:780.75px;top:703.0px;width:120px;text-align:center;font-size:15px;line-height:20px;color:#555;letter-spacing:-0.5px;">04–28</div>
<div class="t" style="left:877.25px;top:703.0px;width:120px;text-align:center;font-size:15px;line-height:20px;color:#555;letter-spacing:-0.5px;">05–10</div>
<div class="t" style="left:965.25px;top:703.0px;width:120px;text-align:center;font-size:15px;line-height:20px;color:#555;letter-spacing:-0.5px;">1</div>
<div class="t" style="left:1042.5px;top:703.0px;width:120px;text-align:center;font-size:14px;line-height:20px;color:#555;">夏夏</div>
<div class="t" style="left:1131.0px;top:703.0px;width:120px;text-align:center;font-size:14px;line-height:20px;color:#555;">前台</div>
<div class="t" style="left:1243.0px;top:703.0px;width:120px;text-align:center;font-size:14px;line-height:20px;color:#555;">散客</div>
<div class="t" style="left:1335.75px;top:703.0px;width:120px;text-align:center;font-size:15px;line-height:20px;color:#555;letter-spacing:-0.5px;">77789087</div>
<div class="t" style="left:1428.0px;top:703.0px;width:120px;text-align:center;font-size:14px;line-height:20px;color:#555;">新订</div>
<div class="t" style="left:1519.0px;top:703.0px;width:120px;text-align:center;font-size:14px;line-height:20px;color:#555;">已支付</div>
<div class="t" style="left:1647px;top:703.0px;font-size:14px;line-height:20px;color:#555;">接待</div>
<div class="t" style="left:1675.5px;top:703.0px;font-size:14px;line-height:20px;color:#555;">:</div>
<div class="t" style="left:1689px;top:703.0px;font-size:14px;line-height:20px;color:#555;">xxxxxxx;</div>
<div class="t" style="left:1767.0px;top:703.0px;width:120px;text-align:center;font-size:14px;line-height:20px;color:#c8374f;">取消订单</div>
<div class="t" style="left:56px;top:749.0px;font-size:15px;line-height:20px;color:#555;letter-spacing:-0.5px;">234</div>
<div class="t" style="left:93.5px;top:749.0px;width:120px;text-align:center;font-size:14px;line-height:20px;color:#555;">大床房</div>
<div class="t" style="left:164.25px;top:749.0px;width:120px;text-align:center;font-size:15px;line-height:20px;color:#555;letter-spacing:-0.5px;">8008</div>
<div class="t" style="left:244.0px;top:749.0px;width:120px;text-align:center;font-size:14px;line-height:20px;color:#555;">门市价</div>
<div class="t" style="left:328.25px;top:749.0px;width:120px;text-align:center;font-size:15px;line-height:20px;color:#555;letter-spacing:-0.5px;">187.00</div>
<div class="t" style="left:405.0px;top:749.0px;width:120px;text-align:center;font-size:14px;line-height:20px;color:#555;">担保留房</div>
<div class="t" style="left:487.25px;top:749.0px;width:120px;text-align:center;font-size:15px;line-height:20px;color:#555;letter-spacing:-0.5px;">14:00</div>
<div class="t" style="left:574.5px;top:749.0px;width:120px;text-align:center;font-size:14px;line-height:20px;color:#555;">夏夏</div>
<div class="t" style="left:674.25px;top:749.0px;width:120px;text-align:center;font-size:15px;line-height:20px;color:#555;letter-spacing:-0.5px;">13800138000</div>
<div class="t" style="left:780.75px;top:749.0px;width:120px;text-align:center;font-size:15px;line-height:20px;color:#555;letter-spacing:-0.5px;">04–28</div>
<div class="t" style="left:877.25px;top:749.0px;width:120px;text-align:center;font-size:15px;line-height:20px;color:#555;letter-spacing:-0.5px;">05–10</div>
<div class="t" style="left:965.25px;top:749.0px;width:120px;text-align:center;font-size:15px;line-height:20px;color:#555;letter-spacing:-0.5px;">1</div>
<div class="t" style="left:1042.5px;top:749.0px;width:120px;text-align:center;font-size:14px;line-height:20px;color:#555;">夏夏</div>
<div class="t" style="left:1131.0px;top:749.0px;width:120px;text-align:center;font-size:14px;line-height:20px;color:#555;">前台</div>
<div class="t" style="left:1243.0px;top:749.0px;width:120px;text-align:center;font-size:14px;line-height:20px;color:#555;">散客</div>
<div class="t" style="left:1335.75px;top:749.0px;width:120px;text-align:center;font-size:15px;line-height:20px;color:#555;letter-spacing:-0.5px;">77789087</div>
<div class="t" style="left:1428.0px;top:749.0px;width:120px;text-align:center;font-size:14px;line-height:20px;color:#555;">新订</div>
<div class="t" style="left:1519.0px;top:749.0px;width:120px;text-align:center;font-size:14px;line-height:20px;color:#555;">已支付</div>
<div class="t" style="left:1647px;top:749.0px;font-size:14px;line-height:20px;color:#555;">接待</div>
<div class="t" style="left:1675.5px;top:749.0px;font-size:14px;line-height:20px;color:#555;">:</div>
<div class="t" style="left:1689px;top:749.0px;font-size:14px;line-height:20px;color:#555;">xxxxxxx;</div>
<div class="t" style="left:1767.0px;top:749.0px;width:120px;text-align:center;font-size:14px;line-height:20px;color:#c8374f;">取消订单</div>
<div class="t" style="left:56px;top:795.0px;font-size:15px;line-height:20px;color:#555;letter-spacing:-0.5px;">234</div>
<div class="t" style="left:93.5px;top:795.0px;width:120px;text-align:center;font-size:14px;line-height:20px;color:#555;">大床房</div>
<div class="t" style="left:164.25px;top:795.0px;width:120px;text-align:center;font-size:15px;line-height:20px;color:#555;letter-spacing:-0.5px;">8008</div>
<div class="t" style="left:244.0px;top:795.0px;width:120px;text-align:center;font-size:14px;line-height:20px;color:#555;">门市价</div>
<div class="t" style="left:328.25px;top:795.0px;width:120px;text-align:center;font-size:15px;line-height:20px;color:#555;letter-spacing:-0.5px;">187.00</div>
<div class="t" style="left:405.0px;top:795.0px;width:120px;text-align:center;font-size:14px;line-height:20px;color:#555;">担保留房</div>
<div class="t" style="left:487.25px;top:795.0px;width:120px;text-align:center;font-size:15px;line-height:20px;color:#555;letter-spacing:-0.5px;">14:00</div>
<div class="t" style="left:574.5px;top:795.0px;width:120px;text-align:center;font-size:14px;line-height:20px;color:#555;">夏夏</div>
<div class="t" style="left:674.25px;top:795.0px;width:120px;text-align:center;font-size:15px;line-height:20px;color:#555;letter-spacing:-0.5px;">13800138000</div>
<div class="t" style="left:780.75px;top:795.0px;width:120px;text-align:center;font-size:15px;line-height:20px;color:#555;letter-spacing:-0.5px;">04–28</div>
<div class="t" style="left:877.25px;top:795.0px;width:120px;text-align:center;font-size:15px;line-height:20px;color:#555;letter-spacing:-0.5px;">05–10</div>
<div class="t" style="left:965.25px;top:795.0px;width:120px;text-align:center;font-size:15px;line-height:20px;color:#555;letter-spacing:-0.5px;">1</div>
<div class="t" style="left:1042.5px;top:795.0px;width:120px;text-align:center;font-size:14px;line-height:20px;color:#555;">夏夏</div>
<div class="t" style="left:1131.0px;top:795.0px;width:120px;text-align:center;font-size:14px;line-height:20px;color:#555;">前台</div>
<div class="t" style="left:1243.0px;top:795.0px;width:120px;text-align:center;font-size:14px;line-height:20px;color:#555;">散客</div>
<div class="t" style="left:1335.75px;top:795.0px;width:120px;text-align:center;font-size:15px;line-height:20px;color:#555;letter-spacing:-0.5px;">77789087</div>
<div class="t" style="left:1428.0px;top:795.0px;width:120px;text-align:center;font-size:14px;line-height:20px;color:#555;">新订</div>
<div class="t" style="left:1519.0px;top:795.0px;width:120px;text-align:center;font-size:14px;line-height:20px;color:#555;">已支付</div>
<div class="t" style="left:1647px;top:795.0px;font-size:14px;line-height:20px;color:#555;">接待</div>
<div class="t" style="left:1675.5px;top:795.0px;font-size:14px;line-height:20px;color:#555;">:</div>
<div class="t" style="left:1689px;top:795.0px;font-size:14px;line-height:20px;color:#555;">xxxxxxx;</div>
<div class="t" style="left:1767.0px;top:795.0px;width:120px;text-align:center;font-size:14px;line-height:20px;color:#c8374f;">取消订单</div>
<div class="r" style="left:24px;top:552px;width:1866px;height:1px;background:#e2e2e2;"></div>
<div class="r" style="left:24px;top:598px;width:1866px;height:1px;background:#e2e2e2;"></div>
<div class="r" style="left:24px;top:644px;width:1866px;height:1px;background:#e2e2e2;"></div>
<div class="r" style="left:24px;top:690px;width:1866px;height:1px;background:#e2e2e2;"></div>
<div class="r" style="left:24px;top:736px;width:1866px;height:1px;background:#e2e2e2;"></div>
<div class="r" style="left:24px;top:782px;width:1866px;height:1px;background:#e2e2e2;"></div>
<div class="r" style="left:24px;top:828px;width:1866px;height:1px;background:#e2e2e2;"></div>
<div class="t" style="left:1265px;top:1001.0px;font-size:14px;line-height:20px;color:#555;">共</div>
<div class="t" style="left:1297px;top:1001.0px;font-size:15px;line-height:20px;color:#22aab0;">7</div>
<div class="t" style="left:1323px;top:1001.0px;font-size:14px;line-height:20px;color:#555;">条</div>
<div class="t" style="left:1361px;top:1001.0px;font-size:14px;line-height:20px;color:#555;">每页</div>
<div class="r" style="left:1392px;top:994px;width:61px;height:32px;background:#fff;border:1px solid #d6d6d6;border-radius:16px;"></div>
<div class="t" style="left:1402px;top:1001.0px;font-size:15px;line-height:20px;color:#0a72bf;">50</div>
<svg style="left:1428px;top:998px" width="17" height="25"><path d="M8.5 0 L17 10.5 H0 Z M0 14 H17 L8.5 24.5 Z" fill="#0a72bf"/></svg>
<div class="t" style="left:1457px;top:1001.0px;font-size:14px;line-height:20px;color:#555;">条</div>
<div class="t" style="left:1527px;top:1001.0px;font-size:14px;line-height:20px;color:#555;"><span style="color:#0a72bf">1</span>/1页</div>
<div class="r" style="left:1568px;top:994px;width:60px;height:32px;background:#fff;border:1px solid #d6d6d6;border-radius:16px;"></div>
<div class="t" style="left:1636px;top:1001.0px;font-size:14px;line-height:20px;color:#0a72bf;-webkit-text-stroke:0.3px #0a72bf;">跳转</div>
<div class="r" style="left:1696px;top:994px;width:70px;height:32px;background:linear-gradient(90deg,#55a6de,#0a70be);border-radius:16px;box-shadow:0 7px 14px rgba(10,114,191,0.22);"></div>
<svg style="left:1722px;top:1002px" width="12" height="17"><path d="M12 0 V17 L0 8.5 Z" fill="#fff"/></svg>
<div class="r" style="left:1787px;top:994px;width:70px;height:32px;background:linear-gradient(90deg,#55a6de,#0a70be);border-radius:16px;box-shadow:0 7px 14px rgba(10,114,191,0.22);"></div>
<svg style="left:1818px;top:1002px" width="12" height="17"><path d="M0 0 V17 L12 8.5 Z" fill="#fff"/></svg>
<div class="r" style="left:146px;top:120px;width:200px;height:180px;background:#0675bf;box-shadow:0 8px 30px rgba(20,120,200,0.32);z-index:4;"></div>
<div class="t" style="left:168px;top:139.5px;font-size:14px;line-height:20px;color:#fff;z-index:6;">新增预订</div>
<div class="t" style="left:168px;top:169.5px;font-size:14px;line-height:20px;color:#fff;z-index:6;">查看订单详情</div>
<div class="t" style="left:168px;top:199.5px;font-size:14px;line-height:20px;color:#fff;z-index:6;">修改订单</div>
<div class="t" style="left:168px;top:229.5px;font-size:14px;line-height:20px;color:#fff;z-index:6;">订单排房</div>
<div class="t" style="left:168px;top:259.5px;font-size:14px;line-height:20px;color:#fff;z-index:6;">排房入住</div>
</body></html>
